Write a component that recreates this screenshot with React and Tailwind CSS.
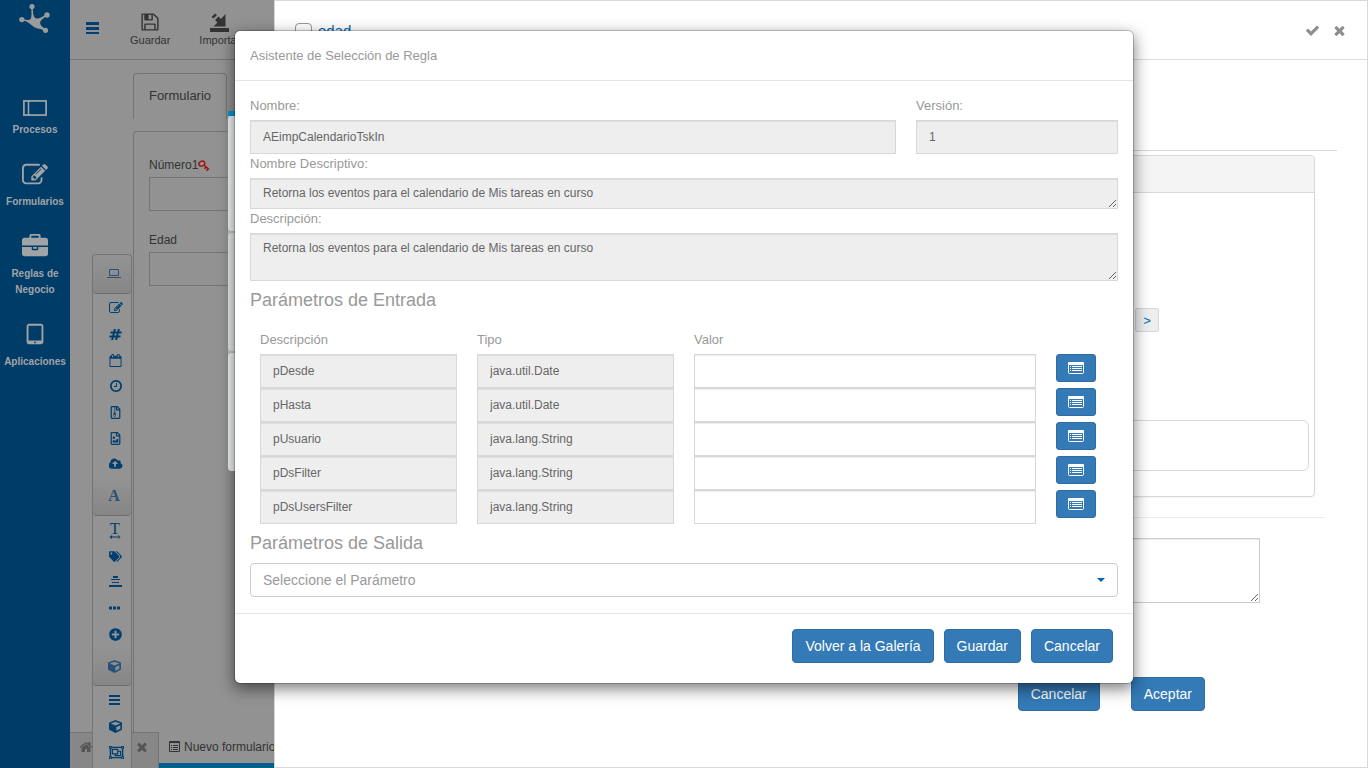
import React, { useState } from 'react';
import { FaRegFileArchive, FaRegFileImage, FaTags, FaPlusCircle, FaCube, FaRegObjectGroup } from 'react-icons/fa';

const Glyph = ({ d, size = 14, box = '0 0 1792 1792' }) => (
  <svg width={size} height={size} viewBox={box} fill="currentColor" aria-hidden="true">
    <path d={d} />
  </svg>
);

const PATHS = {
  edit: 'M888 1184l116-116-152-152-116 116v56h96v96h56zm440-720q-16-16-33 1l-350 350q-17 17-1 33t33-1l350-350q17-17 1-33zm80 594v190q0 119-84.5 203.5t-203.5 84.5h-832q-119 0-203.5-84.5t-84.5-203.5v-832q0-119 84.5-203.5t203.5-84.5h832q63 0 117 25 15 7 18 23 3 17-9 29l-49 49q-14 14-32 8-23-6-45-6h-832q-66 0-113 47t-47 113v832q0 66 47 113t113 47h832q66 0 113-47t47-113v-126q0-13 9-22l64-64q15-15 35-7t20 29zm-96-738l288 288-672 672h-288v-288zm444 132l-92 92-288-288 92-92q28-28 68-28t68 28l152 152q28 28 28 68t-28 68z',
  briefcase: 'M640 256h512v-128h-512v128zm1152 640v480q0 66-47 113t-113 47h-1472q-66 0-113-47t-47-113v-480h672v160q0 26 19 45t45 19h320q26 0 45-19t19-45v-160h672zm-768 0v128h-256v-128h256zm768-480v384h-1792v-384q0-66 47-113t113-47h352v-160q0-40 28-68t68-28h576q40 0 68 28t28 68v160h352q66 0 113 47t47 113z',
  tablet: 'M960 1408q0-26-19-45t-45-19-45 19-19 45 19 45 45 19 45-19 19-45zm384-160v-960q0-13-9.5-22.5t-22.5-9.5h-832q-13 0-22.5 9.5t-9.5 22.5v960q0 13 9.5 22.5t22.5 9.5h832q13 0 22.5-9.5t9.5-22.5zm128-960v1088q0 66-47 113t-113 47h-832q-66 0-113-47t-47-113v-1088q0-66 47-113t113-47h832q66 0 113 47t47 113z',
  check: 'M1671 566q0 40-28 68l-724 724-136 136q-28 28-68 28t-68-28l-136-136-362-362q-28-28-28-68t28-68l136-136q28-28 68-28t68 28l294 295 656-657q28-28 68-28t68 28l136 136q28 28 28 68z',
  times: 'M1490 1322q0 40-28 68l-136 136q-28 28-68 28t-68-28l-294-294-294 294q-28 28-68 28t-68-28l-136-136q-28-28-28-68t28-68l294-294-294-294q-28-28-28-68t28-68l136-136q28-28 68-28t68 28l294 294 294-294q28-28 68-28t68 28l136 136q28 28 28 68t-28 68l-294 294 294 294q28 28 28 68z',
  home: 'M1472 992v480q0 26-19 45t-45 19h-384v-384h-256v384h-384q-26 0-45-19t-19-45v-480q0-1 .5-3t.5-3l575-474 575 474q1 2 1 6zm223-69l-62 74q-8 9-21 11h-3q-13 0-21-7l-692-577-692 577q-12 8-24 7-13-2-21-11l-62-74q-8-10-7-23.5t11-21.5l719-599q32-26 76-26t76 26l244 204v-195q0-14 9-23t23-9h192q14 0 23 9t9 23v408l219 182q10 8 11 21.5t-7 23.5z',
  save: 'M512 1536h768v-384h-768v384zm896 0h128v-896q0-14-10-38.5t-20-34.5l-281-281q-10-10-34-20t-39-10v416q0 40-28 68t-68 28h-576q-40 0-68-28t-28-68v-416h-128v1280h128v-416q0-40 28-68t68-28h832q40 0 68 28t28 68v416zm-384-928v-320q0-13-9.5-22.5t-22.5-9.5h-192q-13 0-22.5 9.5t-9.5 22.5v320q0 13 9.5 22.5t22.5 9.5h192q13 0 22.5-9.5t9.5-22.5zm640 32v928q0 40-28 68t-68 28h-1344q-40 0-68-28t-28-68v-1344q0-40 28-68t68-28h928q40 0 88 20t76 48l280 280q28 28 48 76t20 88z',
  hash: 'M991 1024l64-256h-254l-64 256h254zm768-504l-56 224q-7 24-31 24h-327l-64 256h311q15 0 25 12 10 14 6 28l-56 224q-5 24-31 24h-327l-81 328q-7 24-31 24h-224q-16 0-26-12-9-12-6-28l78-312h-254l-81 328q-7 24-31 24h-225q-15 0-25-12-9-12-6-28l78-312h-311q-15 0-25-12-9-12-6-28l56-224q7-24 31-24h327l64-256h-311q-15 0-25-12-10-14-6-28l56-224q5-24 31-24h327l81-328q7-24 32-24h224q15 0 25 12 9 12 6 28l-78 312h254l81-328q7-24 32-24h224q15 0 25 12 9 12 6 28l-78 312h311q15 0 25 12 9 12 6 28z',
  calendar: 'M192 1664h1408v-1024h-1408v1024zm384-1216v-288q0-14-9-23t-23-9h-64q-14 0-23 9t-9 23v288q0 14 9 23t23 9h64q14 0 23-9t9-23zm768 0v-288q0-14-9-23t-23-9h-64q-14 0-23 9t-9 23v288q0 14 9 23t23 9h64q14 0 23-9t9-23zm384-64v1280q0 52-38 90t-90 38h-1408q-52 0-90-38t-38-90v-1280q0-52 38-90t90-38h128v-96q0-66 47-113t113-47h64q66 0 113 47t47 113v96h384v-96q0-66 47-113t113-47h64q66 0 113 47t47 113v96h128q52 0 90 38t38 90z',
  clock: 'M1024 544v448q0 14-9 23t-23 9h-320q-14 0-23-9t-9-23v-64q0-14 9-23t23-9h224v-352q0-14 9-23t23-9h64q14 0 23 9t9 23zm416 352q0-148-73-273t-198-198-273-73-273 73-198 198-73 273 73 273 198 198 273 73 273-73 198-198 73-273zm224 0q0 209-103 385.5t-279.5 279.5-385.5 103-385.5-103-279.5-279.5-103-385.5 103-385.5 279.5-279.5 385.5-103 385.5 103 279.5 279.5 103 385.5z',
  cloud: 'M1216 864q0-14-9-23l-352-352q-9-9-23-9t-23 9l-351 351q-10 12-10 24 0 14 9 23t23 9h224v352q0 13 9.5 22.5t22.5 9.5h192q13 0 22.5-9.5t9.5-22.5v-352h224q13 0 22.5-9.5t9.5-22.5zm640 288q0 159-112.5 271.5t-271.5 112.5h-1088q-185 0-316.5-131.5t-131.5-316.5q0-130 70-240t188-165q-2-30-2-43 0-212 150-362t362-150q156 0 285.5 87t188.5 231q71-62 166-62 106 0 181 75t75 181q0 76-41 138 130 31 213.5 135.5t83.5 238.5z',
};

const Logo = () => (
  <svg width="32" height="31" viewBox="0 0 32 31" fill="#9b9b9b" aria-hidden="true">
    <circle cx="13" cy="3.600" r="2.600" />
    <circle cx="28" cy="12" r="2.700" />
    <circle cx="2.800" cy="16.600" r="2.600" />
    <circle cx="26.500" cy="27.300" r="2.600" />
    <path d="M12.300 4h1.500c.1 5 .4 9 2.200 11 2.500 1.500 7-.6 11-3.700l1 1.300c-4 3-7.200 5.400-6.800 7.800.4 2.600 2.800 3.600 5.600 6l-1 1.500c-4-2.800-7.800-1.800-11.200-4.200-3-2.300-5.600-5.600-12-6.500l.3-1.500c4.500 1 7 2.300 8.600.4C13 14 12.400 9 12.300 4z" />
  </svg>
);

const ProcessIcon = () => (
  <svg width="24" height="28" viewBox="0 0 24 28" fill="none" stroke="currentColor" aria-hidden="true">
    <rect x="0.900" y="11.900" width="22.200" height="14.200" strokeWidth="1.700" />
    <path d="M5.500 12v14" strokeWidth="1.500" />
  </svg>
);

const ImportIcon = () => (
  <svg width="20" height="20" viewBox="0 0 20 20" fill="currentColor" aria-hidden="true">
    <path d="M0 16h19v4H0z" />
    <path d="M15.500 2v12.500H3.500l4-4L5 8l3.500-3.500L11 7z" />
    <path d="M1.500 5 5 1.500l2 1.500-3.500 3.500z" />
  </svg>
);

const LaptopIcon = () => (
  <svg width="14" height="10" viewBox="0 0 14 10" fill="none" stroke="currentColor" aria-hidden="true">
    <path d="M2.500.5h9v6h-9zM0 8.500h14" />
  </svg>
);

const Stripes = ({ rows, size = 14 }) => (
  <svg width={size} height="12" viewBox={`0 0 ${size} 12`} fill="currentColor" aria-hidden="true">
    {rows.map(([x, y, w, h]) => <rect key={y} x={x} y={y} width={w} height={h} />)}
  </svg>
);

const TextWidthIcon = () => (
  <span className="flex flex-col items-center">
    <span className="font-['Liberation_Serif',serif] text-base leading-[13px]">T</span>
    <svg width="12" height="4" viewBox="0 0 12 4" fill="currentColor" aria-hidden="true">
      <path d="M2 1.500h8v1H2zM3 0v4L.5 2zM9 0v4l2.500-2z" />
    </svg>
  </span>
);

const DotsIcon = () => (
  <svg width="11" height="4" viewBox="0 0 11 4" fill="currentColor" aria-hidden="true">
    <path d="M0 .5h3v3H0zM4 .5h3v3H4zM8 .5h3v3H8z" />
  </svg>
);

const KeyIcon = () => (
  <svg width="12" height="12" viewBox="0 0 12 12" fill="none" stroke="#a3100f" strokeWidth="1.500" aria-hidden="true">
    <ellipse cx="3.800" cy="3.600" rx="3" ry="2.400" transform="rotate(-20 3.800 3.600)" />
    <path d="M6 5l5 4.500M8 7l-1.500 1.800M10 9l-1.500 1.800" />
  </svg>
);

const ListAltIcon = () => (
  <svg width="16" height="12" viewBox="0 0 16 12" aria-hidden="true">
    <rect x="0.500" y="0.500" width="15" height="11" rx="1" fill="none" stroke="#fff" />
    <path d="M0 1q0-1 1-1h14q1 0 1 1v2H0z" fill="#fff" />
    <path d="M2 4.500h1M4 4.500h10M2 6.500h1M4 6.500h10M2 8.500h1M4 8.500h10" stroke="#fff" />
  </svg>
);

const ListTabIcon = () => (
  <svg width="11" height="11" viewBox="0 0 11 11" fill="none" stroke="currentColor" aria-hidden="true">
    <path d="M.5.5h10v10H.5zM0 1.500h11M2 4.500h1M4 4.500h5M2 6.500h1M4 6.500h5M2 8.500h1M4 8.500h5" />
  </svg>
);

const navItems = [
  { label: 'Procesos', icon: <ProcessIcon /> },
  { label: 'Formularios', icon: <Glyph d={PATHS.edit} size={26} /> },
  { label: 'Reglas de Negocio', icon: <Glyph d={PATHS.briefcase} size={26} /> },
  { label: 'Aplicaciones', icon: <Glyph d={PATHS.tablet} size={26} /> },
];

const toolGroups = [
  {
    name: 'Campos',
    head: <LaptopIcon />,
    tools: [
      ['Texto', <Glyph d={PATHS.edit} />],
      ['Número', <Glyph d={PATHS.hash} size={13} />],
      ['Fecha', <Glyph d={PATHS.calendar} size={13} />],
      ['Hora', <Glyph d={PATHS.clock} />],
      ['Archivo', <FaRegFileArchive size={13} />],
      ['Imagen', <FaRegFileImage size={13} />],
      ['Subir', <Glyph d={PATHS.cloud} box="0 0 1920 1792" />],
    ],
  },
  {
    name: 'Textos',
    head: <span className="font-['Liberation_Serif',serif] text-base font-bold">A</span>,
    tools: [
      ['Título', <TextWidthIcon />],
      ['Etiqueta', <FaTags size={13} />],
      ['Centrado', <Stripes size={13} rows={[[4, 0, 5, 2], [2, 3, 9, 1], [3, 6, 7, 1], [0, 9, 13, 2]]} />],
      ['Separador', <DotsIcon />],
      ['Agregar', <FaPlusCircle size={13} />],
    ],
  },
  {
    name: 'Contenedores',
    head: <FaCube size={13} />,
    tools: [
      ['Lista', <Stripes size={11} rows={[[0, 1, 11, 2], [0, 5, 11, 2], [0, 9, 11, 2]]} />],
      ['Cubo', <FaCube size={13} />],
      ['Grupo', <FaRegObjectGroup size={15} />],
    ],
  },
];

const params = [
  ['pDesde', 'java.util.Date'],
  ['pHasta', 'java.util.Date'],
  ['pUsuario', 'java.lang.String'],
  ['pDsFilter', 'java.lang.String'],
  ['pDsUsersFilter', 'java.lang.String'],
];

const field = 'block w-full border border-[#d8d8d8] px-3 text-xs text-[#666] outline-none shadow-[inset_0_1px_1px_rgba(0,0,0,0.075)]';
const label = 'block mb-[5px] text-[13px] leading-[19px] text-[#999]';
const heading = 'mt-[9px] mb-[10px] text-lg leading-[20px] text-[#999]';

const Button = ({ children }) => (
  <button type="button" className="h-[34px] rounded border border-[#2e6da4] bg-[#337ab7] px-3 text-sm text-white">
    {children}
  </button>
);

const Sidebar = () => (
  <nav className="w-[70px] shrink-0 bg-[#003c68] text-[#a0a4a7]">
    <div className="flex h-[66px] justify-center pt-[3px]"><Logo /></div>
    {navItems.map((item) => (
      <a key={item.label} href="#" className="block px-1 pt-[23px] text-center text-[10px] leading-4 font-bold">
        <span className="mb-[5px] flex h-7 items-center justify-center">{item.icon}</span>
        {item.label}
      </a>
    ))}
  </nav>
);

const Toolbox = () => (
  <div className="absolute top-[254px] bottom-0 left-[22px] w-[40px] rounded-t border border-b-0 border-[#737473] bg-[#929392] text-[#003f6f]">
    {toolGroups.map((group) => (
      <div key={group.name}>
        <button type="button" aria-label={group.name} className="flex h-[39px] w-full items-center justify-center rounded border-b border-[#6c6d6c] bg-gradient-to-b from-[#929392] to-[#858685] pl-1 text-[#28517a]">
          {group.head}
        </button>
        <div className="pt-px">
          {group.tools.map(([name, icon]) => (
            <button key={name} type="button" aria-label={name} className="flex h-[26px] w-full items-center pl-4">{icon}</button>
          ))}
        </div>
      </div>
    ))}
  </div>
);

const Workspace = () => (
  <div className="relative flex min-w-0 flex-1 flex-col bg-[#919291] text-[#333]">
    <header className="flex h-[60px] shrink-0 items-start border-b border-[#737473] pt-3 text-[11px] leading-4">
      <button type="button" aria-label="Menú" className="mt-[10px] ml-4 text-[#003f6f]">
        <Stripes size={13} rows={[[0, 0, 13, 3], [0, 5, 13, 3], [0, 10, 13, 2]]} />
      </button>
      <button type="button" className="ml-[31px] flex flex-col items-center">
        <Glyph d={PATHS.save} size={20} />
        Guardar
      </button>
      <button type="button" className="ml-[29px] flex flex-col items-center">
        <ImportIcon />
        Importar
      </button>
    </header>
    <main className="flex flex-1 flex-col pt-[13px] pl-[63px]">
      <div className="flex">
        <button type="button" className="h-[46px] w-[94px] rounded-t border border-b-0 border-[#737473] pb-[2px] text-[13px]">Formulario</button>
      </div>
      <div className="mt-3 flex-1 rounded-tl border-t border-l border-[#737473] px-[15px] pt-6 text-xs leading-[19px]">
        <label htmlFor="numero" className="flex items-center">Número1<KeyIcon /></label>
        <input id="numero" className="mt-[2px] mb-5 block h-[34px] w-60 border border-[#737473]" />
        <label htmlFor="edad" className="block">Edad</label>
        <input id="edad" className="mt-[2px] block h-[34px] w-60 border border-[#737473]" />
      </div>
    </main>
    <footer className="flex h-[36px] shrink-0 text-xs">
      <div className="flex w-[89px] shrink-0 items-center justify-between border-t border-r border-[#737473] bg-[#868786] px-[9px] pb-2 text-[#555]">
        <Glyph d={PATHS.home} size={14} />
        <Glyph d={PATHS.times} size={14} />
      </div>
      <div className="flex flex-1 items-center gap-1 border-b-[5px] border-[#00608c] pb-[2px] pl-[10px]">
        <ListTabIcon />
        Nuevo formulario
      </div>
    </footer>
    <Toolbox />
  </div>
);

/* Rule gallery that stays open under the wizard */
const Gallery = () => (
  <div className="absolute top-[111px] left-[228px] w-[600px] rounded-b-sm border-t-[5px] border-[#0098d8] bg-[#c5c7c7]">
    <div className="h-[115px] rounded-sm bg-[#f3f6f6]" />
    <div className="my-[2px] h-[118px] rounded-sm bg-[#e7eaea]" />
    <div className="h-[118px] rounded-sm bg-[#f3f6f6]" />
  </div>
);

const PropertiesPanel = () => (
  <section className="absolute inset-y-0 right-0 left-[274px] flex flex-col border border-[#d8d8d8] bg-white">
    <header className="flex h-[59px] shrink-0 items-center justify-between border-b border-[#ddd] px-5">
      <label className="flex items-center gap-[6px] pt-[3px] text-[15px] text-[#0067b1]">
        <input type="checkbox" className="size-[17px] appearance-none rounded border border-[#999]" />
        edad
      </label>
      <div className="flex gap-3 text-[#8e8e8e]">
        <button type="button" aria-label="Aceptar cambios"><Glyph d={PATHS.check} size={15} /></button>
        <button type="button" aria-label="Cerrar"><Glyph d={PATHS.times} size={15} /></button>
      </div>
    </header>
    <div className="flex flex-col pt-[90px] pl-5">
      <div className="mr-[30px] border-b border-[#d8d8d8]" />
      <div className="mt-1 mr-[52px] rounded border border-[#d8d8d8] shadow-xs">
        <div className="h-[37px] rounded-t border-b border-[#d8d8d8] bg-[#f4f4f4]" />
        <div className="flex flex-col pt-[115px] pr-[5px] pb-[25px] pl-5">
          <button type="button" className="mr-[150px] size-6 self-end rounded-xs border border-[#d3d6d8] bg-[#eceeef] text-[13px] leading-none text-[#0067b1]">&gt;</button>
          <div className="mt-[88px] h-[51px] rounded-md border border-[#d8d8d8]" />
        </div>
      </div>
      <div className="mt-5 mr-[42px] border-b border-[#ececec]" />
      <textarea aria-label="Regla" className="mt-5 mr-[107px] h-[65px] border border-[#ccc] shadow-[inset_0_1px_1px_rgba(0,0,0,0.075)]" />
      <div className="mt-[74px] mr-[162px] flex justify-end gap-[31px]">
        <Button>Cancelar</Button>
        <Button>Aceptar</Button>
      </div>
    </div>
  </section>
);

const RuleWizard = () => {
  const [values, setValues] = useState({});

  return (
    <div role="dialog" aria-labelledby="wizard-title" className="relative mx-auto mt-[30px] w-full max-w-[900px] rounded-md border border-black/20 bg-white bg-clip-padding shadow-[0_5px_15px_rgba(0,0,0,0.5)]">
      <header className="border-b border-[#e5e5e5] p-[15px]">
        <h1 id="wizard-title" className="text-[13px] leading-[19px] text-[#999]">Asistente de Selección de Regla</h1>
      </header>

      <div className="px-[15px] pt-[15px] pb-4">
        <div className="-mx-[10px] flex">
          <div className="w-3/4 px-[10px]">
            <label htmlFor="nombre" className={label}>Nombre:</label>
            <input id="nombre" readOnly value="AEimpCalendarioTskIn" className={`${field} h-[34px] bg-[#eee]`} />
          </div>
          <div className="w-1/4 px-[10px]">
            <label htmlFor="version" className={label}>Versión:</label>
            <input id="version" readOnly value="1" className={`${field} h-[34px] bg-[#eee]`} />
          </div>
        </div>
        <label htmlFor="descriptivo" className={label}>Nombre Descriptivo:</label>
        <textarea id="descriptivo" readOnly value="Retorna los eventos para el calendario de Mis tareas en curso" className={`${field} h-[31px] bg-[#eee] py-[6px]`} />
        <label htmlFor="descripcion" className={label}>Descripción:</label>
        <textarea id="descripcion" readOnly value="Retorna los eventos para el calendario de Mis tareas en curso" className={`${field} h-[48px] bg-[#eee] py-[6px]`} />

        <h2 className={heading}>Parámetros de Entrada</h2>
        <table className="mt-5 w-full table-fixed">
          <thead>
            <tr className="text-left text-[13px] leading-[19px] text-[#999]">
              <th className="w-1/4 px-[10px] pb-[5px] font-normal">Descripción</th>
              <th className="w-1/4 px-[10px] pb-[5px] font-normal">Tipo</th>
              <th className="w-5/12 px-[10px] pb-[5px] font-normal">Valor</th>
              <th className="w-1/12" />
            </tr>
          </thead>
          <tbody>
            {params.map(([name, type]) => (
              <tr key={name} className="align-top">
                <td className="px-[10px]"><input aria-label="Descripción" readOnly value={name} className={`${field} h-[34px] bg-[#eee]`} /></td>
                <td className="px-[10px]"><input aria-label="Tipo" readOnly value={type} className={`${field} h-[34px] bg-[#eee]`} /></td>
                <td className="px-[10px]">
                  <input
                    aria-label={`Valor de ${name}`}
                    value={values[name] || ''}
                    onChange={(e) => setValues({ ...values, [name]: e.target.value })}
                    className={`${field} h-[34px] bg-white`}
                  />
                </td>
                <td className="px-[10px]">
                  <button type="button" aria-label={`Elegir ${name}`} className="flex h-7 w-10 items-center justify-center rounded-[3px] border border-[#2e6da4] bg-[#337ab7]">
                    <ListAltIcon />
                  </button>
                </td>
              </tr>
            ))}
          </tbody>
        </table>

        <h2 className={heading}>Parámetros de Salida</h2>
        <div className="relative">
          <select aria-label="Parámetros de Salida" className="block h-[34px] w-full appearance-none rounded border border-[#ccc] bg-white px-3 text-sm text-[#999]">
            <option>Seleccione el Parámetro</option>
          </select>
          <svg className="pointer-events-none absolute top-[15px] right-[13px]" width="8" height="4" viewBox="0 0 8 4" aria-hidden="true">
            <path d="M0 0h8L4 4z" fill="#0067b1" />
          </svg>
        </div>
      </div>

      <footer className="flex justify-end gap-[10px] border-t border-[#e5e5e5] px-5 pt-[15px] pb-5">
        <Button>Volver a la Galería</Button>
        <Button>Guardar</Button>
        <Button>Cancelar</Button>
      </footer>
    </div>
  );
};

export default function App() {
  return (
    <div className="relative flex h-screen overflow-hidden font-['Liberation_Sans',Arial,sans-serif]">
      <Sidebar />
      <Workspace />
      <PropertiesPanel />
      <Gallery />
      <div className="absolute inset-0 overflow-hidden">
        <RuleWizard />
      </div>
    </div>
  );
}
